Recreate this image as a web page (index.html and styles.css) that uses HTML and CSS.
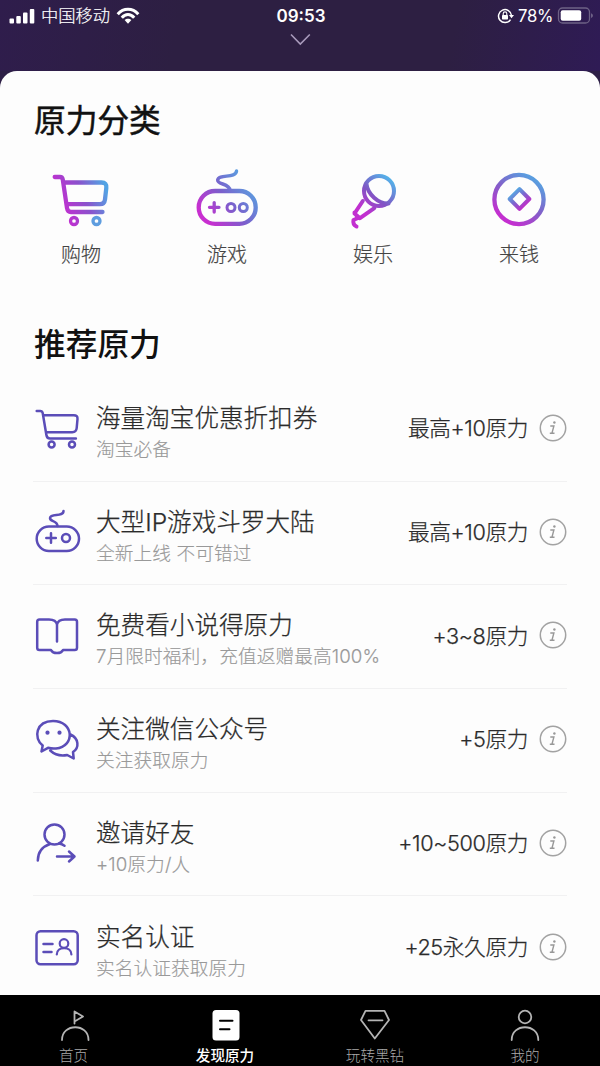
FILE: index.html
```html
<!DOCTYPE html>
<html lang="zh-CN">
<head>
<meta charset="utf-8">
<title>发现原力</title>
<link rel="stylesheet" href="styles.css">
</head>
<body>
<svg class="defs" width="0" height="0" aria-hidden="true">
  <defs>
    <linearGradient id="gCart" gradientUnits="userSpaceOnUse" x1="62" y1="208" x2="106" y2="190"><stop offset="0" stop-color="#c030d0"/><stop offset=".5" stop-color="#8a52cc"/><stop offset="1" stop-color="#52a4e4"/></linearGradient>
    <linearGradient id="gPad" gradientUnits="userSpaceOnUse" x1="206" y1="218" x2="250" y2="184"><stop offset="0" stop-color="#c82fd0"/><stop offset=".5" stop-color="#7b5fcc"/><stop offset="1" stop-color="#5a9fe0"/></linearGradient>
    <linearGradient id="gMic" gradientUnits="userSpaceOnUse" x1="364" y1="212" x2="390" y2="180"><stop offset="0" stop-color="#c22fd0"/><stop offset=".45" stop-color="#8055c4"/><stop offset="1" stop-color="#55b0e8"/></linearGradient>
    <linearGradient id="gCoin" gradientUnits="userSpaceOnUse" x1="506" y1="219" x2="534" y2="179"><stop offset="0" stop-color="#c42fd0"/><stop offset=".5" stop-color="#835fc9"/><stop offset="1" stop-color="#5a9ddf"/></linearGradient>
    <linearGradient id="gHole" gradientUnits="userSpaceOnUse" x1="513" y1="191" x2="526" y2="206"><stop offset="0" stop-color="#50b4e6"/><stop offset=".5" stop-color="#7a68ce"/><stop offset="1" stop-color="#bd30c8"/></linearGradient>
    <symbol id="info" viewBox="0 0 28 28"><circle cx="14" cy="14" r="12.7" fill="none" stroke="#a2a2a2" stroke-width="1.5"/><path d="M11.300 12h3.600l-1.900 7M10.800 19.200h4.700" fill="none" stroke="#989898" stroke-width="1.400"/><circle cx="15.400" cy="8.500" r="1.200" fill="#989898"/></symbol>
  </defs>
</svg>
<div class="screen">
  <header class="top">
    <div class="status">
      <div class="carrier">
        <svg width="26" height="16" viewBox="9 6 26 16" fill="#fff"><rect x="9.500" y="16.500" width="4.500" height="5" rx="1"/><rect x="16.300" y="14" width="4.500" height="7.500" rx="1"/><rect x="23" y="10.500" width="4.500" height="11" rx="1"/><rect x="29.800" y="7" width="4.500" height="14.500" rx="1"/></svg>
        <span class="operator">中国移动</span>
        <svg width="24" height="18" viewBox="117 5 24 18" fill="none" stroke="#fff" stroke-width="3"><path d="M118.700 12.300C124.500 5.700 133.500 5.700 139.300 12.300M122.800 15.800C126.500 11.500 131.500 11.500 135.200 15.800"/><path d="M129 21.800l-3.400-3.800c1.900-1.800 4.900-1.800 6.800 0z" fill="#fff" stroke="none"/></svg>
      </div>
      <div class="clock">09:53</div>
      <div class="power">
        <svg width="18" height="18" viewBox="494 6 18 18" fill="none" stroke="#fff" stroke-width="1.500"><path d="M508.500 18.600A6.500 6.500 0 1 1 509.500 14.500"/><path d="M507 14h5l-2.500 3.300z" fill="#fff" stroke="none"/><rect x="500" y="14" width="6" height="4.500" rx=".7" fill="#fff" stroke="none"/><path d="M501.200 14v-1.300a1.800 1.800 0 0 1 3.600 0V14" stroke-width="1.100"/></svg>
        <span class="percent">78%</span>
        <svg width="36" height="18" viewBox="556 6 36 18"><rect x="557.500" y="7" width="31" height="15" rx="4" fill="none" stroke="#6d6185" stroke-width="1.300"/><rect x="559.700" y="9.200" width="20.500" height="10.600" rx="2" fill="#fff"/><path d="M590.300 12.200c1.800.8 1.800 4 0 4.800z" fill="#8a809e"/></svg>
      </div>
    </div>
    <svg class="chevron" width="24" height="14" viewBox="288 32 24 14"><path d="M291 34.500l9.300 9.500 9.500-9.500" fill="none" stroke="#a89abb" stroke-width="1.600"/></svg>
  </header>

  <main class="sheet">
    <h2 class="heading">原力分类</h2>
    <div class="categories">
      <div class="category">
        <svg width="70" height="70" viewBox="45 164 70 70" class="thick" stroke="url(#gCart)"><path d="M53.700 177h5.300q2.300 0 2.800 2.700L66 208q.6 4 4 4h31.500M63 182.500h37.500q5.500 0 4.800 5.500l-1.300 11.500q-.6 4.700-5 4.700H66"/><circle cx="73" cy="221" r="3.500" stroke-width="3.300"/><circle cx="95.500" cy="221" r="3.500" stroke-width="3.300" stroke="#5e9ddf"/></svg>
        <span>购物</span>
      </div>
      <div class="category">
        <svg width="70" height="70" viewBox="192 164 70 70" class="thick" stroke="url(#gPad)"><rect x="198.700" y="191" width="57" height="32.800" rx="16.400"/><path d="M236.500 171c-.5 8-18 2.500-18.800 9-.5 5 12 3 12.300 10.500" stroke-width="3.500"/><path d="M209.500 207.300h9.500M214.200 202.600v9.500" stroke-width="3.300"/><circle cx="231" cy="207.500" r="4" stroke-width="3"/><circle cx="243.300" cy="207.500" r="4" stroke-width="3"/></svg>
        <span>游戏</span>
      </div>
      <div class="category">
        <svg width="70" height="70" viewBox="337 164 70 70" class="thick" stroke="url(#gMic)"><g stroke-width="4"><circle cx="378" cy="191" r="15"/><path d="M365.500 184c1 10 12 20 22 19.500M361.800 201l-8.300 12.500 5.500 4.700 14.300-10M353.500 212.500l3.500 5.500-4.500 2q-1 4.500 3 6.500"/></g></svg>
        <span>娱乐</span>
      </div>
      <div class="category">
        <svg width="70" height="70" viewBox="485 164 70 70" class="thick" stroke="url(#gCoin)"><circle cx="520" cy="199.500" r="24.600"/><path d="M520.500 189.200l9.800 9.800-9.800 9.800-9.800-9.800z" stroke="url(#gHole)" stroke-width="4"/></svg>
        <span>来钱</span>
      </div>
    </div>

    <h2 class="heading strong">推荐原力</h2>
    <ul class="list">
      <li class="row">
        <svg width="50" height="50" viewBox="33 404 50 50" class="line"><path d="M36.700 411h3.500q2 0 2.500 2l3.700 22q.5 3.500 3.500 3.500h26M43.500 415.300h30.300q4 0 3.700 3.700l-.8 9q-.4 4.200-4.400 4.200H46.500"/><circle cx="51.600" cy="444.600" r="3"/><circle cx="72" cy="444.600" r="3"/></svg>
        <div class="copy"><h3>海量淘宝优惠折扣券</h3><p>淘宝必备</p></div>
        <span class="value">最高+10原力</span><svg class="info" width="28" height="28"><use href="#info"/></svg>
      </li>
      <li class="row">
        <svg width="50" height="50" viewBox="33 508 50 50" class="line"><rect x="36.700" y="526.500" width="42.300" height="24.500" rx="12.200"/><path d="M63.500 511c0 6.500-13 1.800-13.500 7-.3 4 7.500 2 7.500 8M46.300 538h9.500M51 533.300v9.500"/><circle cx="66" cy="538" r="4"/></svg>
        <div class="copy"><h3>大型IP游戏斗罗大陆</h3><p>全新上线 不可错过</p></div>
        <span class="value">最高+10原力</span><svg class="info" width="28" height="28"><use href="#info"/></svg>
      </li>
      <li class="row">
        <svg width="50" height="50" viewBox="33 612 50 50" class="line"><path d="M57 641.500v-17q-1-5-8-5h-9.500q-2.300 0-2.300 2.300v26q0 2.300 2.300 2.300H51q1.500 3 6 3t6-3h11.700q2.300 0 2.300-2.300v-26q0-2.300-2.300-2.300H65q-7 0-8 5"/></svg>
        <div class="copy"><h3>免费看小说得原力</h3><p>7月限时福利，充值返赠最高100%</p></div>
        <span class="value">+3~8原力</span><svg class="info" width="28" height="28"><use href="#info"/></svg>
      </li>
      <li class="row">
        <svg width="50" height="50" viewBox="33 715 50 50" class="line"><path d="M41.500 751.500l1.200-6C33 738 36 721 53 721c21 0 22.500 25.500 3 27.500q-4 .4-8-.7zM70.500 734.500c8.500 4 9 13 2.500 17.500l.7 6.500-6.500-3.500q-10 2-17-4.500"/><circle cx="47.500" cy="732.700" r="2.100" class="dot"/><circle cx="59.500" cy="732.700" r="2.100" class="dot"/></svg>
        <div class="copy"><h3>关注微信公众号</h3><p>关注获取原力</p></div>
        <span class="value">+5原力</span><svg class="info" width="28" height="28"><use href="#info"/></svg>
      </li>
      <li class="row">
        <svg width="50" height="50" viewBox="33 819 50 50" class="line"><circle cx="54.500" cy="834.500" r="10"/><path d="M37.800 860.500q.2-12.500 12.200-16.500M59 843.500q3 .5 5.500 2.200M57 856.500h17.500M69 851.500l5.500 5-5.500 5"/></svg>
        <div class="copy"><h3>邀请好友</h3><p>+10原力/人</p></div>
        <span class="value">+10~500原力</span><svg class="info" width="28" height="28"><use href="#info"/></svg>
      </li>
      <li class="row">
        <svg width="50" height="50" viewBox="33 923 50 50" class="line"><rect x="36.500" y="931.200" width="41.200" height="33" rx="4"/><path d="M43.500 944h9M43.500 952h8" /><circle cx="64" cy="943.500" r="4.300" stroke-width="2.200"/><path d="M56.800 954.500c0-8.500 14.600-8.500 14.600 0" stroke-width="2.200"/></svg>
        <div class="copy"><h3>实名认证</h3><p>实名认证获取原力</p></div>
        <span class="value">+25永久原力</span><svg class="info" width="28" height="28"><use href="#info"/></svg>
      </li>
    </ul>
  </main>

  <nav class="tabs">
    <div class="tab">
      <svg width="34" height="34" viewBox="58 1008 34 34"><path d="M62 1040c0-17 26.500-17 26.500 0M74.500 1023.500V1011.500l8.500 5-8.500 5"/></svg>
      <span class="home">首页</span>
    </div>
    <div class="tab active">
      <svg width="34" height="34" viewBox="208 1008 34 34"><rect x="212.500" y="1010" width="27" height="30.500" rx="3.500" fill="#fff" stroke="none"/><path d="M220 1020.800h12.500M220 1029.200h9.500" stroke="#000" stroke-width="2"/></svg>
      <span>发现原力</span>
    </div>
    <div class="tab">
      <svg width="34" height="34" viewBox="358 1008 34 34"><path d="M365.500 1010.800h19l4.500 9.200-14.200 18.500L361 1020zM368.500 1020.300h14"/></svg>
      <span>玩转黑钻</span>
    </div>
    <div class="tab">
      <svg width="34" height="34" viewBox="508 1008 34 34"><circle cx="525" cy="1017" r="6.300"/><path d="M511.700 1040c0-17 26.600-17 26.600 0"/></svg>
      <span>我的</span>
    </div>
  </nav>
</div>
</body>
</html>
```

FILE: styles.css
```css
* { box-sizing: border-box; }
body, h2, h3, p, ul { margin: 0; padding: 0; }
body {
  background: #2d1f46;
  font-family: Inter, "Noto Sans CJK SC", sans-serif;
  color: #2b2b2b;
}
svg { display: block; flex: none; }
.defs { position: absolute; }
.screen {
  width: 600px;
  height: 1066px;
  display: flex;
  flex-direction: column;
  overflow: hidden;
  white-space: nowrap;
}

.top {
  height: 71px;
  flex: none;
  background: linear-gradient(100deg, #2f1d4c, #2d1f42 30%, #2d1f42 75%, #2f1b55);
  color: #fff;
}
.status {
  height: 30px;
  display: grid;
  grid-template-columns: 1fr auto 1fr;
  align-items: center;
  padding: 0 7px 0 9px;
}
.carrier, .power { display: flex; align-items: center; }
.carrier { gap: 6px; }
.power { justify-content: flex-end; gap: 4px; }
.operator { font-size: 17.300px; line-height: 30px; font-weight: 300; padding-top: 1px; -webkit-text-stroke: .2px; }
.clock { font-size: 17px; font-weight: 600; }
.percent { font-size: 16.700px; letter-spacing: -.3px; }
.chevron { margin: 2px auto 0; }

.sheet {
  flex: 1;
  min-height: 0;
  background: #fdfdfd;
  border-radius: 17px 17px 0 0;
  padding-top: 26px;
}
.heading {
  height: 48px;
  line-height: 48px;
  padding-left: 34px;
  font-size: 31.700px;
  font-weight: 400;
  color: #111;
  -webkit-text-stroke: .5px;
}
.strong { margin-top: 51px; font-weight: 500; -webkit-text-stroke: 0; }

.categories {
  display: grid;
  grid-template-columns: repeat(4, 146px);
  margin: 19px 0 0 8px;
}
.category {
  display: flex;
  flex-direction: column;
  align-items: center;
  font-size: 20px;
  line-height: 30px;
  font-weight: 300;
  color: #444;
  gap: 6px;
}
.category span { -webkit-text-stroke: .2px; }
.thick { fill: none; stroke-width: 4.300; stroke-linecap: round; stroke-linejoin: round; }

.list { list-style: none; padding: 0 33px; margin-top: 9px; }
.row {
  height: 103.700px;
  display: flex;
  align-items: center;
  border-bottom: 1.500px solid #f1f1f2;
}
.row:last-child { border-bottom: 0; }
.line { fill: none; stroke: #5b4db8; stroke-width: 2.500; stroke-linecap: round; stroke-linejoin: round; }
.dot { fill: #5b4db8; stroke: none; }
.copy { flex: 1; margin-left: 13px; padding-top: 5px; }
.copy h3 { font-size: 24.600px; line-height: 36px; font-weight: 300; -webkit-text-stroke: .25px; }
.copy p { font-size: 18.700px; line-height: 28px; font-weight: 300; color: #999; letter-spacing: .08px; -webkit-text-stroke: .15px; }
.value { font-size: 21.700px; font-weight: 300; line-height: 30px; letter-spacing: -.4px; padding-bottom: 2px; -webkit-text-stroke: .25px; }
.info { margin: 0 0 3px 11px; }

.tabs {
  height: 71px;
  flex: none;
  display: grid;
  grid-template-columns: repeat(4, 1fr);
  background: #000;
  padding-top: 13px;
}
.tab {
  display: flex;
  flex-direction: column;
  align-items: center;
  gap: 4px;
  font-size: 14.600px;
  line-height: 20px;
  font-weight: 300;
  color: #aaa;
}
.home { margin-right: 3px; }
.tab svg { fill: none; stroke: #b4b4b4; stroke-width: 1.800; stroke-linecap: round; stroke-linejoin: round; }
.active { color: #fff; font-weight: 500; }
```
